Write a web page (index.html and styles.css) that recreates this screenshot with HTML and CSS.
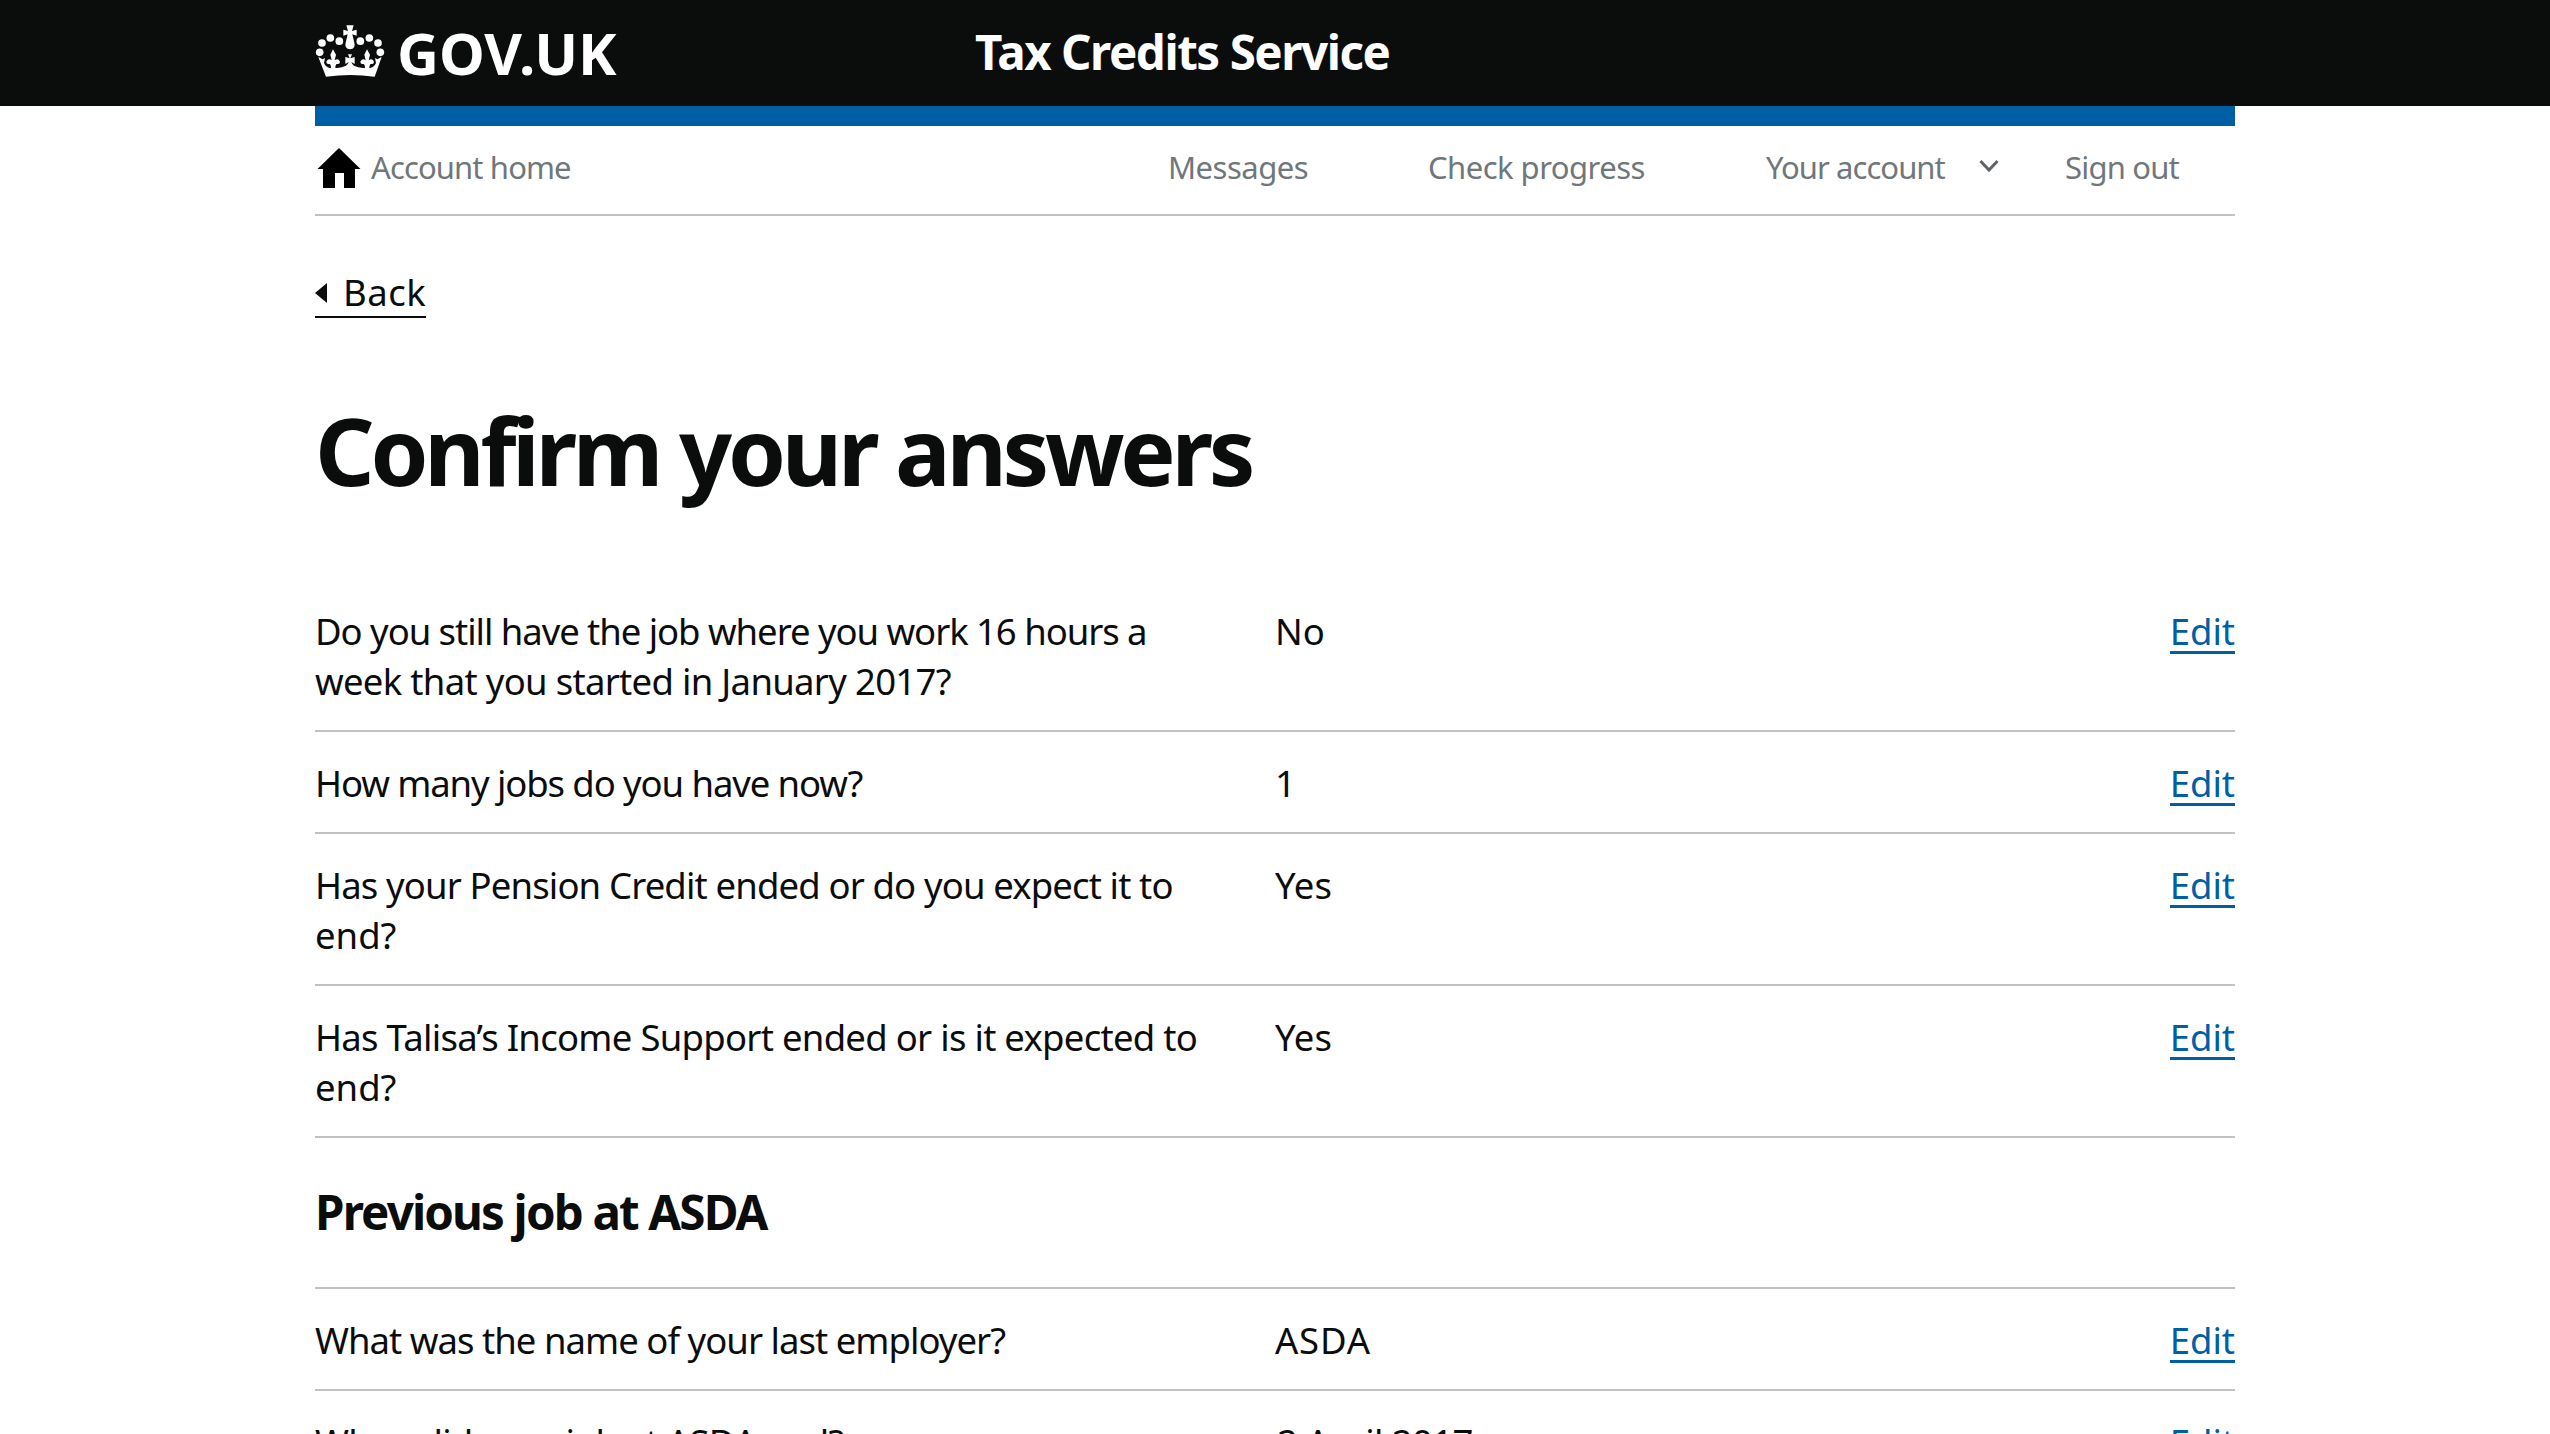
FILE: index.html
```html
<!DOCTYPE html>
<html lang="en">
<head>
<meta charset="utf-8">
<title>Confirm your answers - Tax Credits Service - GOV.UK</title>
<link rel="stylesheet" href="styles.css">
</head>
<body>
<header class="header">
  <div class="container header-inner">
    <a class="logo" href="#">
      <svg class="crown" viewBox="45 74 210 160" fill="#fff" aria-hidden="true">
        <circle cx="59" cy="158" r="11.500"/><circle cx="66" cy="130" r="11.500"/><circle cx="91" cy="115" r="11.500"/><circle cx="118" cy="124.500" r="11.500"/>
        <circle cx="181" cy="124.500" r="11.500"/><circle cx="208" cy="115" r="11.500"/><circle cx="234" cy="130" r="11.500"/><circle cx="241" cy="158" r="11.500"/>
        <path d="M139 77h22l-5 17 14-4v18l-13-4 6 25q5 18-13 20-18-2-13-20l6-25-13 4V90l14 4z"/>
        <path d="M55 172l13 7 7-4-3 15q5 12 17 15h22q15-1 27-7 6-4 8-11l-10 6v-21l13 4-5-12h12l-5 12 13-4v21l-10-6q2 7 8 11 12 6 27 7h22q12-3 17-15l-3-15 7 4 13-7-21 59q-73-10-146 0z"/>
        <path d="M99 149l9 16-4 17q10-8 16 4 0 9-9 7-5 0-5 14H93q0-14-5-14-9 2-9-7 6-12 16-4l-4-17zM201 149l9 16-4 17q10-8 16 4 0 9-9 7-5 0-5 14h-13q0-14-5-14-9 2-9-7 6-12 16-4l-4-17z"/>
      </svg>
      <span class="logo-text">GOV.UK</span>
    </a>
    <span class="service-name">Tax Credits Service</span>
  </div>
</header>
<div class="container">
  <nav class="account-nav">
    <a class="home" href="#">
      <svg class="home-icon" viewBox="0 0 44 40" aria-hidden="true"><path d="M22 0 43.500 21H38v19H27V25H18v15H6V21H.5z"/></svg>
      <span class="home-label">Account home</span>
    </a>
    <a class="nav-messages" href="#">Messages</a>
    <a class="nav-progress" href="#">Check progress</a>
    <a class="nav-account" href="#">Your account</a>
    <svg class="chevron" viewBox="0 0 20 14" fill="none" stroke="#606366" stroke-width="3" aria-hidden="true"><path d="M1.500 2 10 11 18.500 2"/></svg>
    <a class="nav-signout" href="#">Sign out</a>
  </nav>
  <main>
    <a class="back" href="#"><span class="back-arrow"></span><span class="back-label">Back</span></a>
    <h1>Confirm your answers</h1>
    <dl class="answers">
      <div class="row"><dt><span class="q-hours">Do you still have the job where you work 16 hours a</span><br><span class="q-started">week that you started in January 2017?</span></dt><dd>No</dd><dd class="action"><a href="#">Edit</a></dd></div>
      <div class="row"><dt><span class="q-jobs">How many jobs do you have now?</span></dt><dd>1</dd><dd class="action"><a href="#">Edit</a></dd></div>
      <div class="row"><dt><span class="q-pension">Has your Pension Credit ended or do you expect it to</span><br>end?</dt><dd>Yes</dd><dd class="action"><a href="#">Edit</a></dd></div>
      <div class="row"><dt><span class="q-income">Has Talisa’s Income Support ended or is it expected to</span><br>end?</dt><dd>Yes</dd><dd class="action"><a href="#">Edit</a></dd></div>
    </dl>
    <h2>Previous job at ASDA</h2>
    <dl class="answers">
      <div class="row"><dt><span class="q-employer">What was the name of your last employer?</span></dt><dd class="employer">ASDA</dd><dd class="action"><a href="#">Edit</a></dd></div>
      <div class="row"><dt><span class="q-end">When did your job at ASDA end?</span></dt><dd class="end-date">2 April 2017</dd><dd class="action"><a href="#">Edit</a></dd></div>
    </dl>
  </main>
</div>
</body>
</html>
```
FILE: styles.css
```css
* { box-sizing: border-box; }
html, body { margin: 0; height: 1434px; overflow: hidden; }
body {
  background: #fff;
  color: #0b0c0c;
  font: 36.5px/50px "Noto Sans", "Open Sans", sans-serif;
  white-space: nowrap;
}
a { color: inherit; text-decoration: none; }
.container { width: 1920px; margin: 0 auto; }

.header { height: 106px; background: #0b0c0c; color: #fff; }
.header-inner { display: flex; height: 106px; padding-top: 24px; }
.logo { display: flex; width: 660px; }
.crown { width: 70px; height: 54px; margin-right: 12px; }
.logo-text { font: bold 58px/58px "Noto Sans", sans-serif; }
.service-name {
  font: bold 47.500px/56px "Noto Sans", sans-serif;
  letter-spacing: -1.45px;
}

.account-nav {
  display: flex;
  height: 110px;
  border-top: 20px solid #005ea5;
  border-bottom: 2px solid #bfc1c3;
  padding-top: 16px;
  color: #6f777b;
  font-size: 31px;
}
.home { display: flex; width: 853px; }
.home-icon { width: 44px; height: 40px; margin: 6px 10px 0 2px; }
.home-label { letter-spacing: -0.88px; }
.nav-messages { width: 260px; letter-spacing: -0.5px; }
.nav-progress { width: 338px; letter-spacing: -0.52px; }
.nav-account { width: 213px; letter-spacing: -0.95px; }
.nav-signout { letter-spacing: -0.8px; }
.chevron { width: 20px; height: 14px; margin-top: 17px; margin-right: 66px; }

main { display: flex; flex-direction: column; align-items: flex-start; }
.back {
  display: flex;
  align-items: center;
  height: 50px;
  margin-top: 52px;
  border-bottom: 2px solid #0b0c0c;
  letter-spacing: 0.5px;
}
.back-label { line-height: 48px; padding-bottom: 1px; }
.back-arrow {
  width: 12px;
  height: 20px;
  margin: 2px 16px 0 0;
  background: #0b0c0c;
  clip-path: polygon(0 50%, 100% 0, 100% 100%);
}
h1 {
  margin: 82px 0 0;
  font-size: 93px;
  line-height: 100px;
  letter-spacing: -4.3px;
}
.answers { width: 100%; margin: 0; }
h1 + .answers { margin-top: 80px; }
.row {
  display: grid;
  grid-template-columns: 960px 1fr auto;
  padding: 26px 0 24px;
  border-bottom: 2px solid #bfc1c3;
}
dt, dd { margin: 0; }
.q-hours { letter-spacing: -1.05px; }
.q-started { letter-spacing: -0.7px; }
.q-jobs { letter-spacing: -1.1px; }
.q-pension { letter-spacing: -0.86px; }
.q-income { letter-spacing: -0.72px; }
.q-employer { letter-spacing: -0.97px; }
.q-end { letter-spacing: -0.74px; }
.employer { letter-spacing: 0.8px; }
.end-date { padding-left: 2px; letter-spacing: -0.6px; }
.action a {
  display: block;
  height: 48px;
  border-bottom: 3px solid #005ea5;
  color: #005ea5;
}
.action { height: 50px; }
h2 {
  width: 100%;
  height: 151px;
  margin: 0;
  padding-top: 49px;
  border-bottom: 2px solid #bfc1c3;
  font-size: 47.500px;
  line-height: 50px;
  letter-spacing: -1.85px;
}
```
